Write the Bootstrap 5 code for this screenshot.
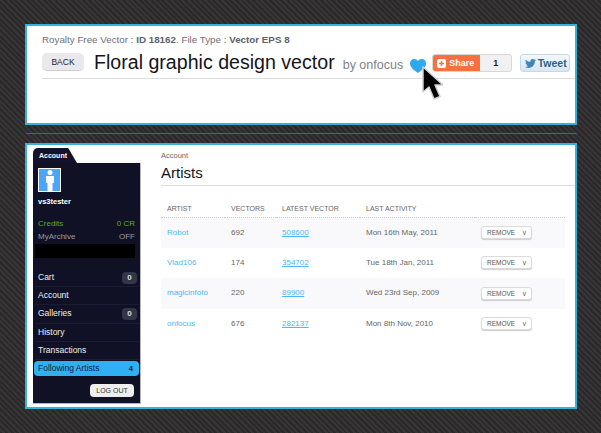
<!DOCTYPE html>
<html lang="en">
<head>
    <meta charset="UTF-8">
    <meta name="viewport" content="width=device-width, initial-scale=1.0">
    <title>Following Artists</title>
    <link href="https://cdn.jsdelivr.net/npm/bootstrap@5.3.0/dist/css/bootstrap.min.css" rel="stylesheet">
    <script src="https://cdn.jsdelivr.net/npm/bootstrap@5.3.0/dist/js/bootstrap.bundle.min.js"></script>
    <style>
        html, body { height: 433px; overflow: hidden; }
        body {
            font-family: "Liberation Sans", Arial, sans-serif;
            background: repeating-linear-gradient(45deg, #2b2829 0, #2b2829 2px, #383536 2px, #383536 4px);
            padding: 24px 24px 0 25px;
            position: relative;
        }
        .panel-box { background: #fff; border: 2px solid #37b0e0; }
        .top-box { height: 101px; padding: 8px 0 0 15px; }
        .meta-line { font-size: 9.8px; line-height: 12px; color: #6d6f78; margin: 0 0 7px; }
        .meta-line b { color: #5e606a; }
        .title-row { height: 26px; padding-right: 6px; border-bottom: 1px solid #dcdcdc; }
        .back-btn { width: 42px; height: 18px; flex: none; padding: 0; font-size: 8.5px; line-height: 18px; color: #222; background: #e9e9ed; border: 0; border-bottom: 1px solid #cfcfcf; border-radius: 5px; margin-right: 10px; }
        .vec-title { font-size: 19.6px; line-height: 20px; margin: -1px 8px 0 0; font-weight: 400; color: #14141c; white-space: nowrap; }
        .by-line { font-size: 12.5px; line-height: 16px; color: #80828c; margin: 4px 7px 0 0; white-space: nowrap; }
        .heart-icon { flex: none; margin-top: 6px; }
        .share-btn { width: 80px; height: 18px; flex: none; margin: 1px 0 0 6px; border: 1px solid #d8d8d8; border-radius: 3px; background: #f1f1f3; font-size: 9px; font-weight: 700; overflow: hidden; }
        .share-left { width: 47px; background: #f67040; color: #fff; line-height: 16px; gap: 3px; padding-left: 4px; }
        .share-count { flex: 1; text-align: center; line-height: 16px; color: #222; }
        .tweet-btn { width: 50px; height: 18px; flex: none; margin: 1px 0 0 8px; border: 1px solid #c4d8e8; border-radius: 3px; background: linear-gradient(#f2f8fc, #d7e7f4); color: #2e5f85; font-size: 10.5px; font-weight: 700; line-height: 16px; gap: 1px; }
        .rule-gap { height: 1px; margin: 8px 0 9px 1px; background: #2a6f8f; width: 551px; }
        .main-box { height: 266px; padding: 3px 0 0 6px; gap: 20px; }
        .side-col { width: 108px; height: 256px; flex: none; }
        .side-tab { width: 44px; height: 15px; background: #12122a; color: #fff; font-size: 7px; font-weight: 700; line-height: 15px; padding-left: 6px; border-radius: 5px 5px 0 0; clip-path: polygon(0 0, 80% 0, 100% 100%, 0 100%); }
        .side-body { height: 241px; background: #111126; border-right: 1px solid #b5b5bb; border-bottom: 1px solid #b5b5bb; padding: 5px 1px 0 2px; color: #e8e8ee; font-size: 8.5px; }
        .avatar-box { width: 23px; height: 24px; margin-left: 3px; background: #4da6f5; border: 1px solid #fff; }
        .user-name { font-weight: 700; font-size: 7.5px; line-height: 10px; color: #fff; margin: 5px 0 10px 3px; }
        .stat-line { line-height: 13px; padding: 0 4px 0 3px; font-size: 8px; color: #9b9ba6; }
        .stat-green { color: #5ca82c; }
        .black-strip { height: 14px; background: #000; margin: 1px 4px 11px 0; }
        .side-link { height: 18.2px; line-height: 17px; padding: 0 2px 0 3px; font-size: 8.5px; color: #eee; border-bottom: 1px solid #1b1b34; }
        .side-count { width: 15px; height: 12px; border-radius: 4px; background: #33354a; text-align: center; font-size: 8px; line-height: 12px; font-weight: 700; color: #ddd; }
        .side-active { height: 15px; line-height: 15px; background: #2eb0f2; color: #12203a; border-radius: 4px; border: 0; margin: 1px 0 0 -1px; padding: 0 6px 0 4px; }
        .side-active b { font-size: 7.5px; }
        .logout-btn { width: 44px; height: 13px; padding: 0; border: 0; border-radius: 4px; background: #eeeeee; color: #333; font-size: 7px; line-height: 13px; margin: 8px 5px 0 auto; display: block; }
        .content-col { flex: 1; min-width: 0; padding-top: 3px; }
        .crumb-text { font-size: 7.5px; line-height: 9px; color: #666; }
        .page-title { font-size: 15px; line-height: 18px; font-weight: 400; color: #14141c; margin: 4px 0 3px; }
        .page-rule { border-bottom: 1px solid #dddddd; margin-bottom: 15px; }
        .artist-table { width: 404px; table-layout: fixed; border-collapse: collapse; font-size: 8px; color: #666; }
        .artist-table th { font-weight: 400; font-size: 7px; color: #666; height: 16px; padding: 0 0 0 6px; border-bottom: 1px dotted #ccc; }
        .artist-table td { height: 30.5px; padding: 0 0 0 6px; }
        .artist-table tr.alt-row td { background: #f9f9fb; }
        .artist-table a { color: #4ab8f4; text-decoration: none; }
        .artist-table a.num-link { text-decoration: underline; }
        .remove-btn { width: 51px; height: 13px; padding: 0 5px; border: 1px solid #dcdcdc; border-radius: 3px; background: #fff; box-shadow: 0 1px 1px #ccc; font-size: 6.5px; line-height: 11px; color: #555; }
        .cursor-over { position: absolute; left: 421px; top: 66px; }
    </style>
</head>
<body>
    <div class="panel-box top-box">
        <p class="meta-line">Royalty Free Vector : <b>ID 18162</b>. File Type : <b>Vector EPS 8</b></p>
        <div class="title-row d-flex align-items-start">
            <button class="back-btn" type="button">BACK</button>
            <h1 class="vec-title">Floral graphic design vector</h1>
            <span class="by-line">by onfocus</span>
            <svg class="heart-icon" width="16" height="14" viewBox="0 0 16 14"><path fill="#2fa9ee" d="M8 14C3 10.500 0 8 0 4.200 0 1.800 1.800 0 4.200 0 5.800 0 7.200.8 8 2 8.800.8 10.200 0 11.800 0 14.200 0 16 1.800 16 4.200 16 8 13 10.500 8 14z"/></svg>
            <div class="share-btn d-flex">
                <div class="share-left d-flex align-items-center">
                    <svg width="9" height="9" viewBox="0 0 9 9"><rect width="9" height="9" rx="2" fill="#fff"/><path d="M4.500 2v5M2 4.500h5" stroke="#f67040" stroke-width="1.500"/></svg>
                    <span>Share</span>
                </div>
                <div class="share-count">1</div>
            </div>
            <div class="tweet-btn d-flex align-items-center justify-content-center">
                <svg width="13" height="11" viewBox="0 0 24 24"><path fill="#3f85b8" d="M23.950 4.570a10 10 0 0 1-2.820.77 4.960 4.960 0 0 0 2.160-2.720c-.95.55-2 .96-3.130 1.200a4.920 4.920 0 0 0-8.380 4.480C7.690 8.100 4.070 6.130 1.640 3.160a4.820 4.820 0 0 0-.67 2.480c0 1.710.87 3.210 2.190 4.100a4.900 4.900 0 0 1-2.230-.61v.06a4.920 4.920 0 0 0 3.950 4.830 5 5 0 0 1-2.210.08 4.940 4.940 0 0 0 4.600 3.420A9.870 9.870 0 0 1 0 19.540a13.940 13.940 0 0 0 7.550 2.210c9.050 0 14-7.500 14-13.980 0-.21 0-.42-.02-.63a9.940 9.940 0 0 0 2.460-2.550z"/></svg>
                <span>Tweet</span>
            </div>
        </div>
    </div>

    <div class="rule-gap"></div>

    <div class="panel-box main-box d-flex">
        <div class="side-col">
            <div class="side-tab">Account</div>
            <div class="side-body">
                <div class="avatar-box d-flex justify-content-center">
                    <svg width="10" height="22" viewBox="0 0 10 22"><circle cx="5" cy="3.500" r="2.500" fill="#fff"/><path fill="#fff" d="M1 7h8v7H7.500v8h-5v-8H1z"/></svg>
                </div>
                <div class="user-name">vs3tester</div>
                <div class="stat-line stat-green d-flex justify-content-between"><span>Credits</span><span>0 CR</span></div>
                <div class="stat-line d-flex justify-content-between"><span>MyArchive</span><span>OFF</span></div>
                <div class="black-strip"></div>
                <div class="side-link d-flex justify-content-between align-items-center"><span>Cart</span><span class="side-count">0</span></div>
                <div class="side-link">Account</div>
                <div class="side-link d-flex justify-content-between align-items-center"><span>Galleries</span><span class="side-count">0</span></div>
                <div class="side-link">History</div>
                <div class="side-link">Transactions</div>
                <div class="side-link side-active d-flex justify-content-between"><span>Following Artists</span><b>4</b></div>
                <button class="logout-btn" type="button">LOG OUT</button>
            </div>
        </div>
        <div class="content-col">
            <div class="crumb-text">Account</div>
            <h2 class="page-title">Artists</h2>
            <div class="page-rule"></div>
            <table class="artist-table">
                <colgroup><col style="width:64px"><col style="width:51px"><col style="width:84px"><col style="width:115px"><col style="width:90px"></colgroup>
                <thead>
                    <tr><th>ARTIST</th><th>VECTORS</th><th>LATEST VECTOR</th><th>LAST ACTIVITY</th><th></th></tr>
                </thead>
                <tbody>
                    <tr class="alt-row"><td><a href="#">Robot</a></td><td>692</td><td><a class="num-link" href="#">508600</a></td><td>Mon 16th May, 2011</td><td><button class="remove-btn d-flex justify-content-between" type="button"><span>REMOVE</span><span>v</span></button></td></tr>
                    <tr><td><a href="#">Vlad106</a></td><td>174</td><td><a class="num-link" href="#">354702</a></td><td>Tue 18th Jan, 2011</td><td><button class="remove-btn d-flex justify-content-between" type="button"><span>REMOVE</span><span>v</span></button></td></tr>
                    <tr class="alt-row"><td><a href="#">magicinfoto</a></td><td>220</td><td><a class="num-link" href="#">89900</a></td><td>Wed 23rd Sep, 2009</td><td><button class="remove-btn d-flex justify-content-between" type="button"><span>REMOVE</span><span>v</span></button></td></tr>
                    <tr><td><a href="#">onfocus</a></td><td>676</td><td><a class="num-link" href="#">282137</a></td><td>Mon 8th Nov, 2010</td><td><button class="remove-btn d-flex justify-content-between" type="button"><span>REMOVE</span><span>v</span></button></td></tr>
                </tbody>
            </table>
        </div>
    </div>

    <svg class="cursor-over" width="22" height="36" viewBox="0 0 22 36"><path d="M2 1v25l6-5 5 12 6-2.500-5-11.500h8z" fill="#000" stroke="#cfcfcf" stroke-width="1.500" stroke-linejoin="round"/></svg>
</body>
</html>
